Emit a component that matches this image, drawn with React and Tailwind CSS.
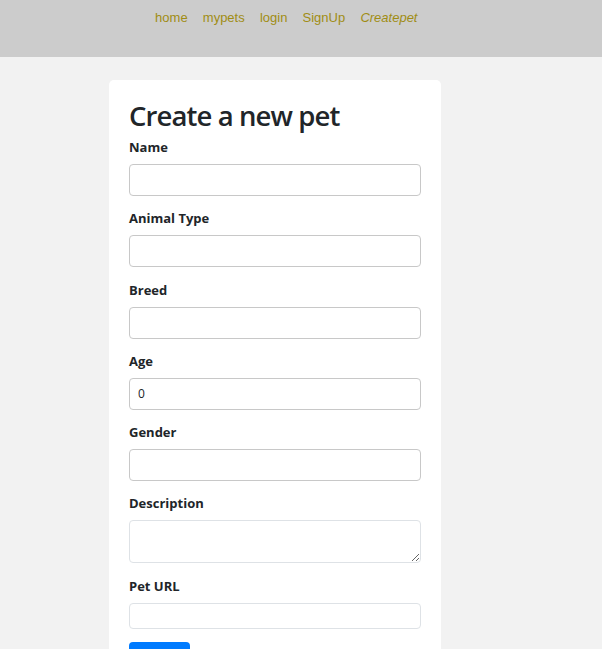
import React from "react";

const Field = ({ label, children }) => (
  <div className="mb-[13.25px]">
    <label className="block h-[19px] leading-[19px] text-[13px] font-bold text-[#212529] mb-[7px]">{label}</label>
    {children}
  </div>
);

const inputCls = "block w-full h-[32px] rounded-[4px] border border-[#c8c8c8] bg-white px-[8px] text-[12px] text-[#212529] outline-none";

export default function App() {
  return (
    <div className="min-h-[649px] bg-[#f2f2f2] font-['Open_Sans',sans-serif]">
      <nav className="h-[57px] bg-[#cccccc] flex items-start pl-[147.5px] pt-[9px]">
        {["home", "mypets", "login", "SignUp"].map((t) => (
          <a key={t} className="px-[7.6px] text-[13px] leading-[18px] text-[#a08c14] font-['Liberation_Sans',Arial,sans-serif]">{t}</a>
        ))}
        <a className="px-[7.6px] text-[13px] leading-[18px] italic text-[#a08c14] font-['Liberation_Sans',Arial,sans-serif]">Createpet</a>
      </nav>
      <div className="pt-[23px] pl-[109px]">
        <div className="w-[332px] bg-white rounded-[5px] px-[20px] pt-[19px] pb-[20px]">
          <h1 className="text-[27.5px] leading-[34px] font-semibold text-[#212529] tracking-[-0.9px] mb-[5px]">Create a new pet</h1>
          <Field label="Name"><input className={inputCls} /></Field>
          <Field label="Animal Type"><input className={inputCls} /></Field>
          <Field label="Breed"><input className={inputCls} /></Field>
          <Field label="Age"><input className={inputCls} defaultValue="0" /></Field>
          <Field label="Gender"><input className={inputCls} /></Field>
          <Field label="Description">
            <textarea className="block w-full h-[43px] rounded-[4px] border border-[#dee2e6] bg-white px-[8px] text-[12px] outline-none" />
          </Field>
          <Field label="Pet URL">
            <input className="block w-full h-[26px] rounded-[4px] border border-[#dee2e6] bg-white px-[8px] text-[12px] outline-none" />
          </Field>
          <button className="h-[34px] w-[61px] rounded-[4px] bg-[#007bff] text-white text-[13px]">Submit</button>
        </div>
      </div>
    </div>
  );
}
